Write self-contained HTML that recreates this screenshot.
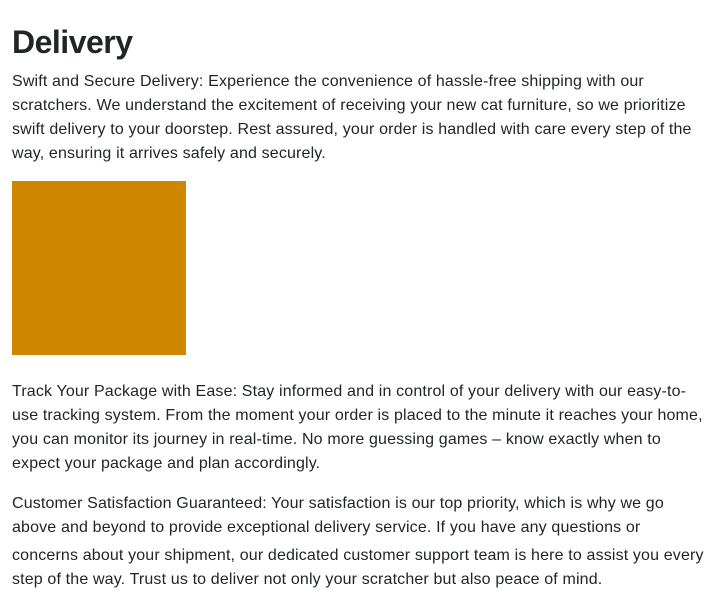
<!DOCTYPE html>
<html><head><meta charset="utf-8"><style>
html,body{margin:0;padding:0;background:#fff;}
body{font-family:"Liberation Sans",Arial,sans-serif;color:#212529;width:720px;height:607px;overflow:hidden;position:relative;}
h1{position:absolute;left:12px;top:23px;margin:0;font-size:32px;font-weight:bold;line-height:38px;letter-spacing:-0.5px;}
p{position:absolute;left:12px;margin:0;font-size:16px;line-height:24px;white-space:nowrap;letter-spacing:0.15px;}
.sq{position:absolute;left:12px;top:181px;width:174px;height:174px;background:#D08700;}
</style></head><body>
<h1>Delivery</h1>
<p style="top:70px">Swift and Secure Delivery: Experience the convenience of hassle-free shipping with our<br>scratchers. We understand the excitement of receiving your new cat furniture, so we prioritize<br>swift delivery to your doorstep. Rest assured, your order is handled with care every step of the<br>way, ensuring it arrives safely and securely.</p>
<div class="sq"></div>
<p style="top:380px">Track Your Package with Ease: Stay informed and in control of your delivery with our easy-to-<br>use tracking system. From the moment your order is placed to the minute it reaches your home,<br>you can monitor its journey in real-time. No more guessing games – know exactly when to<br>expect your package and plan accordingly.</p>
<p style="top:492px">Customer Satisfaction Guaranteed: Your satisfaction is our top priority, which is why we go<br>above and beyond to provide exceptional delivery service. If you have any questions or<br><span style="display:inline-block;margin-top:4px">concerns about your shipment, our dedicated customer support team is here to assist you every</span><br>step of the way. Trust us to deliver not only your scratcher but also peace of mind.</p>
</body></html>
